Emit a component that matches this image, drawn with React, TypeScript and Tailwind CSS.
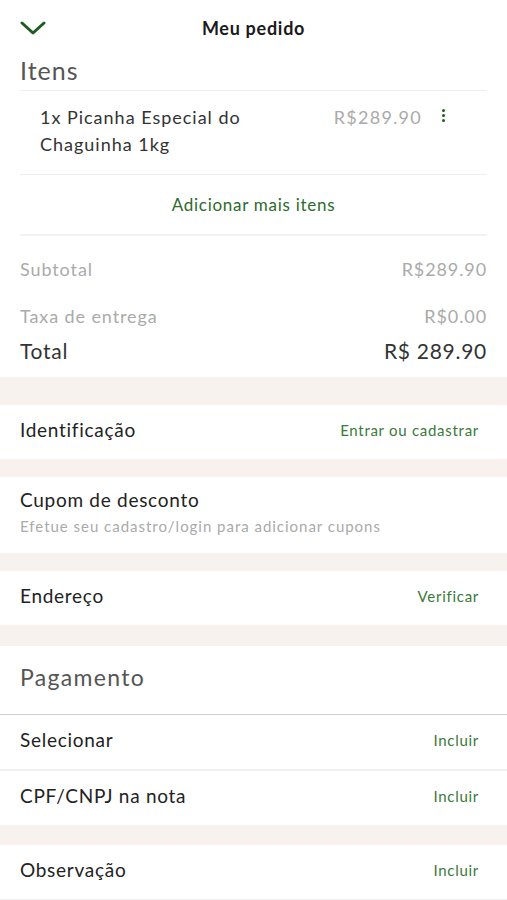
import React from "react";

const green = "text-[#3a7a3a]";

const Band = ({ h }: { h: string }) => <div className={`${h} bg-[#f7f2ee]`} />;

const Row = ({
  label,
  action,
  h = "h-[54px]",
  border,
}: {
  label: string;
  action: string;
  h?: string;
  border?: string;
}) => (
  <div
    className={`${h} flex items-center justify-between pl-5 pr-[28px] pb-[4px] ${border ?? ""}`}
  >
    <span className="text-[19px] text-[#222]">{label}</span>
    <span className={`text-[15px] ${green}`}>{action}</span>
  </div>
);

export default function App() {
  return (
    <div
      className="w-[507px] h-[900px] overflow-hidden bg-white tracking-[0.045em]"
      style={{ fontFamily: "Lato, 'Open Sans', sans-serif" }}
    >
      {/* header */}
      <div className="h-14 grid grid-cols-[1fr_auto_1fr] items-center px-5">
        <svg width="26" height="16" viewBox="0 0 26 16" className="mt-[-1px]">
          <path
            d="M2 3 L13 13 L24 3"
            fill="none"
            stroke="#1f5a1f"
            strokeWidth="3"
            strokeLinecap="round"
            strokeLinejoin="round"
          />
        </svg>
        <h1 className="text-[18px] font-bold text-[#1a1a1a]">Meu pedido</h1>
        <div />
      </div>

      {/* itens */}
      <div className="mx-5">
        <div className="text-[25px] leading-[28px] text-[#555] pb-[6px] border-b border-[#efefef] tracking-[0.04em]">
          Itens
        </div>
        <div className="flex items-start pt-[13px] pb-[16px] border-b border-[#efefef]">
          <p className="flex-1 pl-5 text-[18px] leading-[27px] text-[#333] tracking-[0.055em]">
            1x Picanha Especial do
            <br />
            Chaguinha 1kg
          </p>
          <span className="text-[18px] leading-[27px] text-[#aaa] tracking-[0.07em]">
            R$289.90
          </span>
          <div className="w-5 ml-[11px] mr-[34px] flex flex-col items-center gap-[2px] pt-[5px]">
            <span className="w-[3px] h-[3px] rounded-full bg-[#1f5a1f]" />
            <span className="w-[3px] h-[3px] rounded-full bg-[#1f5a1f]" />
            <span className="w-[3px] h-[3px] rounded-full bg-[#1f5a1f]" />
          </div>
        </div>
        <div className="h-[61px] flex items-center justify-center border-b-2 border-[#f2f2f2]">
          <span className="text-[17px] text-[#2d6a2d]">Adicionar mais itens</span>
        </div>

        {/* totals */}
        <div className="pt-[21px] pb-[12px]">
          <div className="flex justify-between text-[18px] leading-[24px] text-[#aaa] tracking-[0.05em]">
            <span>Subtotal</span>
            <span>R$289.90</span>
          </div>
          <div className="flex justify-between text-[18px] leading-[24px] text-[#aaa] mt-[23px] tracking-[0.05em]">
            <span>Taxa de entrega</span>
            <span>R$0.00</span>
          </div>
          <div className="flex justify-between text-[21px] leading-[28px] text-[#333] mt-[9px]">
            <span>Total</span>
            <span>R$ 289.90</span>
          </div>
        </div>
      </div>

      <Band h="h-[28px]" />
      <Row label="Identificação" action="Entrar ou cadastrar" />
      <Band h="h-[18px]" />

      <div className="h-[76px] flex flex-col justify-center pl-5 pb-[7px]">
        <span className="text-[19px] leading-[26px] text-[#222]">Cupom de desconto</span>
        <span className="text-[15px] leading-[20px] text-[#aaa] mt-[3px] tracking-[0.065em]">
          Efetue seu cadastro/login para adicionar cupons
        </span>
      </div>
      <Band h="h-[18px]" />

      <Row label="Endereço" action="Verificar" />
      <Band h="h-[21px]" />

      <div className="h-[69px] flex items-center pl-5 pb-[5px] border-b border-[#cfcfcf]">
        <span className="text-[23px] text-[#555] tracking-[0.057em]">Pagamento</span>
      </div>
      <Row label="Selecionar" action="Incluir" h="h-[56px]" border="border-b-2 border-[#f0f0f0]" />
      <Row label="CPF/CNPJ na nota" action="Incluir" />
      <Band h="h-[20px]" />
      <Row label="Observação" action="Incluir" h="h-[56px]" border="border-b-2 border-[#f0f0f0]" />
    </div>
  );
}
